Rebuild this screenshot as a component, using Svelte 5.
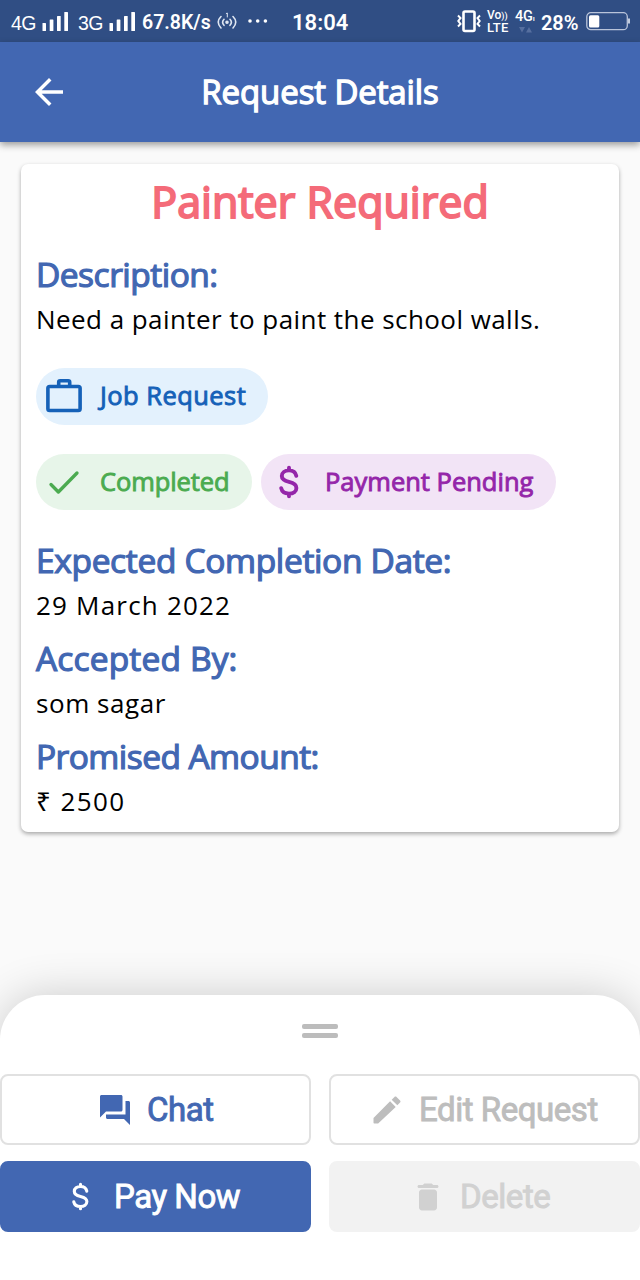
<script>
  const details = [
    { label: 'Expected Completion Date:', value: '29 March 2022', lw: '-0.34px', vw: '1.200px' },
    { label: 'Accepted By:', value: 'som sagar', lw: '0.15px', vw: '0.55px' },
    { label: 'Promised Amount:', value: '₹ 2500', lw: '-0.55px', vw: '1.400px' }
  ];
</script>

{#snippet signal()}
  <svg width="27" height="21" viewBox="0 0 27 21" fill="#fff">
    <rect x="0.5" y="12" width="3.5" height="8" rx=".6" /><rect x="7.7" y="8.5" width="3.7" height="11.5" rx=".6" />
    <rect x="15" y="5" width="3.7" height="15" rx=".6" /><rect x="22.3" y="1" width="3.7" height="19" rx=".6" />
  </svg>
{/snippet}

{#snippet dollar(size, weight)}
  <svg width={size} height={size} viewBox="0 0 36 36" fill="none" stroke="currentColor" stroke-width={weight} stroke-linecap="round" stroke-linejoin="round">
    <path d="M25.3 11.8C24.6 8.4 21.8 6.4 18 6.4c-4.2 0-7.2 2.2-7.2 5.7 0 3.4 2.7 4.7 7.2 5.8 4.8 1.1 7.4 2.7 7.4 6 0 3.6-3.1 5.7-7.4 5.7-4.2 0-7.1-2-7.8-5.4M18 3.8v2.6M18 29.6v2.6" />
  </svg>
{/snippet}

<div class="screen">
  <div class="status">
    <span class="net">4G</span>
    {@render signal()}
    <span class="net">3G</span>
    {@render signal()}
    <span class="speed">67.8K/s</span>
    <svg width="20" height="20" viewBox="0 0 20 20" fill="none" stroke="#dfe6f2" stroke-width="1.6" stroke-linecap="round">
      <path d="M4 5.5Q-1.5 11 4 17M7 8.3Q4.2 11.3 7 14.3M16 5.5Q21.5 11 16 17M13 8.3Q15.800 11.3 13 14.3" />
      <path d="M9.300 2.500 10.300 2V6" stroke-width="1" />
      <circle cx="10" cy="11.200" r="1" fill="#fff" />
    </svg>
    <svg width="20" height="6" viewBox="0 0 20 6" fill="#fff"><circle cx="2" cy="3" r="1.800" /><circle cx="9.700" cy="3" r="1.800" /><circle cx="17.400" cy="3" r="1.800" /></svg>
    <span class="time">18:04</span>
    <svg width="24" height="24" viewBox="0 0 24 24" fill="none" stroke="#fff" stroke-width="2">
      <rect x="6.500" y="2.500" width="11" height="19.500" rx="1.500" stroke-width="2.600" />
      <path d="M1 6.500 3.500 9 1.300 12 3.500 15 1 17.500M23 6.500 20.500 9 22.700 12 20.500 15 23 17.500" stroke-width="2" />
    </svg>
    <span class="volte"><span>Vo<i>))</i></span><b>LTE</b></span>
    <span class="data"><span>4G<i>ı</i></span>
      <svg width="13" height="6" viewBox="0 0 13 6" fill="#566f9f"><path d="M0 0h6L3 5.500zM7 5.500h6L10 0z" /></svg>
    </span>
    <span class="pct">28%</span>
    <svg width="45" height="20" viewBox="0 0 45 20" fill="none">
      <rect x=".8" y="1.700" width="40.500" height="17" rx="4" stroke="#b9c4da" stroke-width="1.300" />
      <rect x="3" y="4.200" width="10.300" height="12.300" rx="1.500" fill="#fff" /><path d="M43 7.500v5" stroke="#dce3ef" stroke-width="1.700" />
    </svg>
  </div>

  <header>
    <svg width="42" height="42" viewBox="0 0 24 24" fill="#fff"><path d="M20 11H7.830l5.590-5.590L12 4l-8 8 8 8 1.410-1.410L7.830 13H20v-2z" /></svg>
    <h1>Request Details</h1>
  </header>

  <main>
    <section class="card">
      <h2>Painter Required</h2>
      <div class="field">
        <h3 class="tight">Description:</h3>
        <p class="desc">Need a painter to paint the school walls.</p>
      </div>
      <div class="chips">
        <span class="chip job">
          <svg width="36" height="36" viewBox="0 0 36 36" fill="none" stroke="currentColor" stroke-width="3.600" stroke-linejoin="round"><rect x="1.900" y="8.500" width="32.200" height="24" rx="1.800" /><path d="M12.700 9V4.200q0-1.500 1.500-1.500h8q1.500 0 1.500 1.500V9" /></svg>
          <span>Job Request</span>
        </span>
      </div>
      <div class="chips second">
        <span class="chip done">
          <svg width="36" height="36" viewBox="0 0 36 36" fill="none" stroke="currentColor" stroke-width="3.300" stroke-linecap="round" stroke-linejoin="round"><path d="M5 20.500 12.400 28 31 9" /></svg>
          <span>Completed</span>
        </span>
        <span class="chip pay">
          {@render dollar(36, 3.9)}
          <span>Payment Pending</span>
        </span>
      </div>
      {#each details as d}
        <div class="field">
          <h3 style:letter-spacing={d.lw}>{d.label}</h3>
          <p style:letter-spacing={d.vw}>{d.value}</p>
        </div>
      {/each}
    </section>
  </main>

  <footer>
    <div class="grip"><i></i><i></i></div>
    <div class="actions">
      <button class="chat">
        <svg width="36" height="36" viewBox="0 0 24 24" fill="currentColor"><path d="M21 6h-2v9H6v2c0 .55.45 1 1 1h11l4 4V7c0-.55-.45-1-1-1zm-4 6V3c0-.55-.45-1-1-1H3c-.55 0-1 .45-1 1v14l4-4h10c.55 0 1-.45 1-1z" /></svg>
        <span>Chat</span>
      </button>
      <button class="edit">
        <svg width="36" height="36" viewBox="0 0 24 24" fill="currentColor"><path d="M3 17.900V20.500q0 .5.500.5H6.100L17.810 9.940l-3.750-3.750L3 17.250zM20.710 7.040c.39-.39.39-1.020 0-1.410l-2.340-2.340c-.39-.39-1.020-.39-1.410 0l-1.830 1.830 3.750 3.750 1.830-1.830z" /></svg>
        <span>Edit Request</span>
      </button>
      <button class="now">
        {@render dollar(31, 3.6)}
        <span>Pay Now</span>
      </button>
      <button class="del">
        <svg width="36" height="36" viewBox="0 0 24 24" fill="currentColor"><path d="M6 19c0 1.100.9 2 2 2h8c1.100 0 2-.9 2-2V9c0-1.100-.9-2-2-2H8c-1.100 0-2 .9-2 2v10zM18 4h-2.500l-.71-.71c-.18-.18-.44-.29-.7-.29H9.910c-.26 0-.52.11-.7.29L8.500 4H6c-.55 0-1 .45-1 1s.45 1 1 1h12c.55 0 1-.45 1-1s-.45-1-1-1z" /></svg>
        <span>Delete</span>
      </button>
    </div>
  </footer>
</div>

<style>
  :global(body) { margin: 0; }
  .screen { width: 640px; height: 1280px; overflow: hidden; display: flex; flex-direction: column; background: #fafafa; font-family: "Open Sans", sans-serif; white-space: nowrap; }
  h1, h2, h3, p { margin: 0; font-weight: 400; }
  svg { display: block; flex: none; }

  .status { flex: none; height: 42px; box-sizing: border-box; padding-left: 11px; display: grid; grid-template-columns: 31px 36px 31px 33px 75px 31px 44px 165px 30px 28px 26px 45px 45px; align-items: center; background: #304e84; color: #fff; font-family: Roboto, sans-serif; }
  .net { font: 19.500px/24px "Liberation Sans", sans-serif; letter-spacing: -0.5px; padding-top: 4px; }
  .speed { font-size: 19.500px; font-weight: 600; padding-top: 3px; }
  .time { font-size: 22px; font-weight: 600; padding-top: 3px; }
  .pct { font-size: 20px; font-weight: 600; letter-spacing: -.1px; padding-top: 3px; }
  .volte { display: flex; flex-direction: column; font: 500 12px/12px Roboto, sans-serif; }
  .volte span { display: block; height: 12px; line-height: 12px; }
  .volte i { font-style: normal; font-size: 9px; line-height: 9px; }
  .volte b { display: block; font: 500 13px/13px Roboto, sans-serif; letter-spacing: .3px; }
  .data { display: flex; flex-direction: column; gap: 1px; font: 500 14.500px/14px Roboto, sans-serif; letter-spacing: -.2px; }
  .data i { font-style: normal; font-size: 8px; }
  .data svg { margin-left: 4px; }

  header { flex: none; height: 100px; position: relative; z-index: 1; display: grid; grid-template-columns: 28px 42px 1fr 70px; align-items: center; background: #4267b2; color: #fff; box-shadow: 0 3px 7px rgba(0,0,0,.38); }
  header svg { grid-column: 2; }
  h1 { text-align: center; font-size: 33px; line-height: 44px; letter-spacing: -.1px; -webkit-text-stroke: 1.3px; }

  main { flex: 1; padding: 22px 21px 0; }
  .card { box-sizing: border-box; height: 668px; padding: 9px 15px 12px; border-radius: 7px; background: #fff; box-shadow: 0 2px 4px rgba(0,0,0,.33); }
  h2 { text-align: center; font-size: 43px; line-height: 58px; color: #f46b79; -webkit-text-stroke: 1.9px; margin-bottom: 22px; }
  .field { margin-bottom: 13.700px; }
  h3 { font-size: 33.500px; line-height: 42px; margin-bottom: 6px; color: #4267b2; -webkit-text-stroke: 1.2px; }
  .tight { letter-spacing: -.5px; }
  p { font-size: 26px; line-height: 36px; color: #000; }
  .desc { letter-spacing: .44px; }
  .chips { display: flex; gap: 9px; margin-top: 31px; }
  .chips.second { margin: 29px 0 29px; }
  .chip { height: 56.700px; box-sizing: border-box; border-radius: 29px; padding-left: 10px; display: flex; align-items: center; gap: 18px; font-size: 25.500px; -webkit-text-stroke: .9px; }
  .chip span { padding-bottom: 2px; }
  .job { width: 232px; background: #e3f1fd; color: #1561b8; letter-spacing: .45px; }
  .done { width: 216px; background: #e7f5e9; color: #4bab50; letter-spacing: -.1px; }
  .pay { width: 295px; background: #f2e4f6; color: #9426a9; }
  .chip svg { -webkit-text-stroke: 0; }

  footer { flex: none; height: 285px; border-radius: 45px 45px 0 0; background: #fff; box-shadow: 0 0 44px rgba(0,0,0,.19); }
  .grip { height: 79px; display: flex; flex-direction: column; align-items: center; gap: 4px; box-sizing: border-box; padding-top: 29px; }
  .grip i { width: 36px; height: 5px; border-radius: 2px; background: #bcbcbc; }
  .actions { display: grid; grid-template-columns: 311px 311px; column-gap: 18px; row-gap: 16px; }
  button { height: 71px; box-sizing: border-box; margin: 0; padding: 0; border: 2px solid #e1e1e1; border-radius: 8px; display: flex; align-items: center; background: #fff; font: 400 33px/40px Roboto, sans-serif; -webkit-text-stroke: .9px; letter-spacing: -.45px; }
  .chat { padding-left: 95px; gap: 14px; color: #4267b2; }
  .edit { padding-left: 38px; gap: 14px; color: #bdbdbd; }
  .now { padding-left: 63px; gap: 18px; background: #4267b2; border-color: #4267b2; color: #fff; }
  .del { padding-left: 79px; gap: 14px; background: #f2f2f2; border-color: #f2f2f2; color: #d1d1d1; }
</style>
